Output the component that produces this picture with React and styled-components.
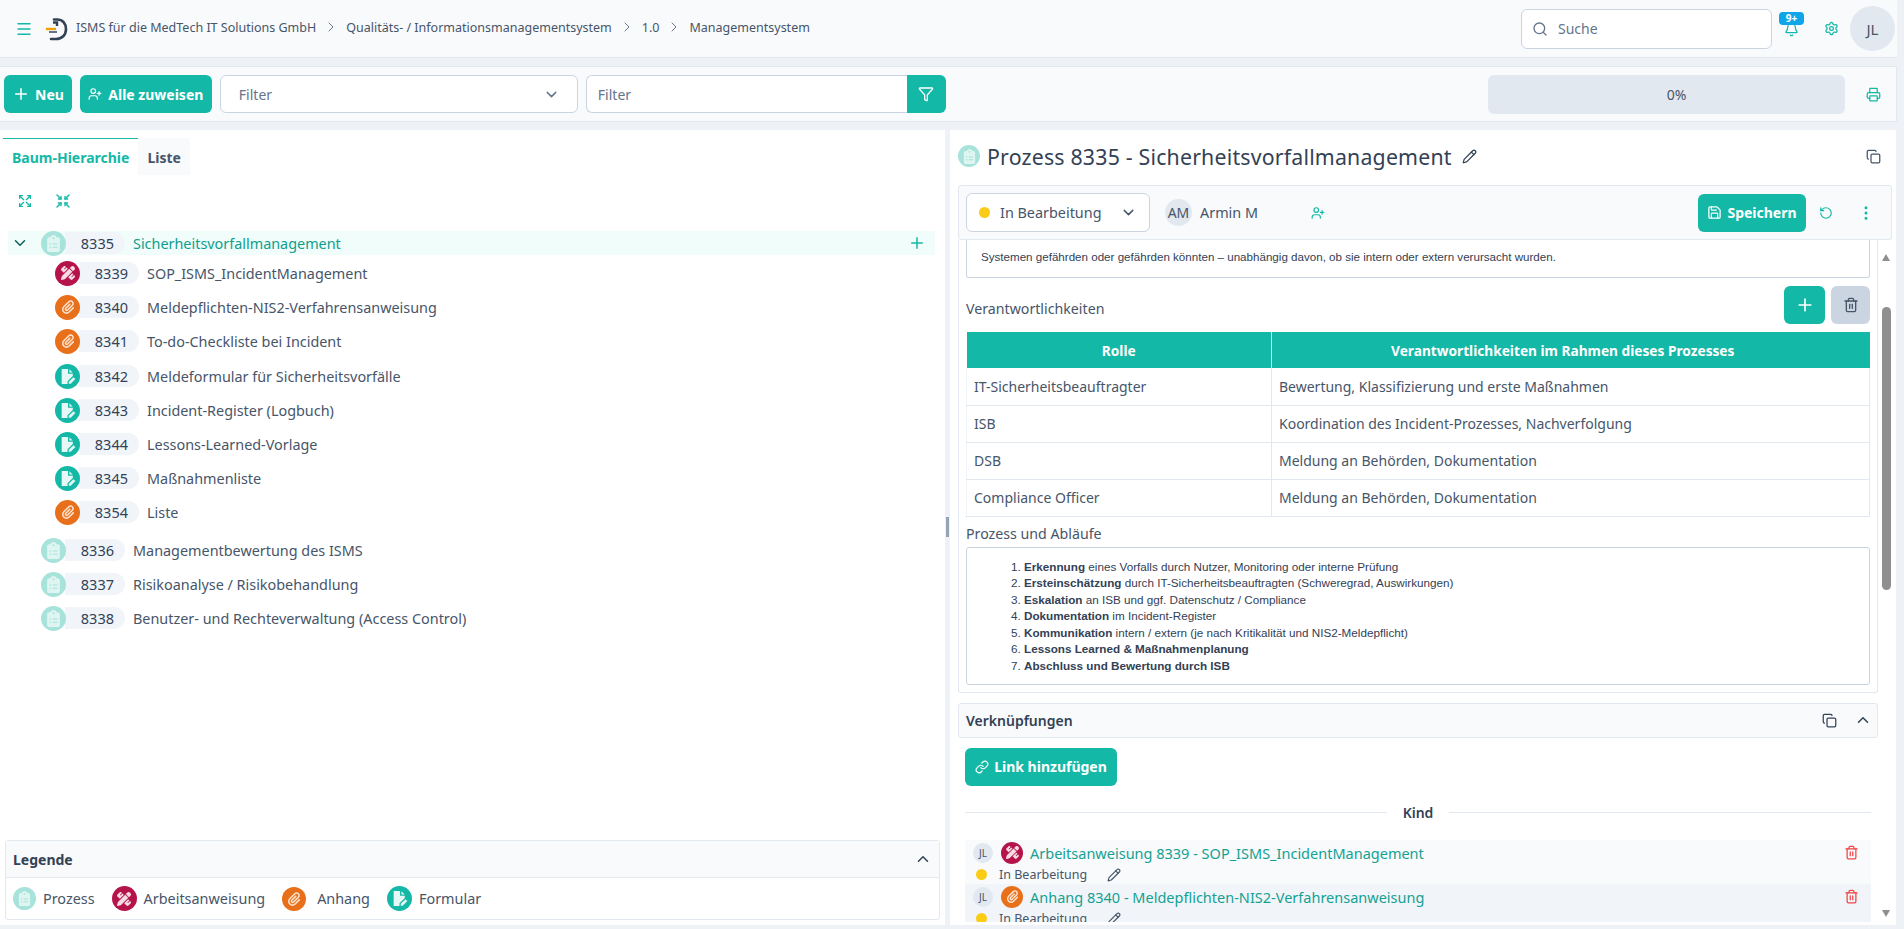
import styled, { createGlobalStyle } from "styled-components";
import {
  Bell,
  ChevronDown,
  ChevronRight,
  ChevronUp,
  Copy,
  EllipsisVertical,
  Filter,
  Link as LinkGlyph,
  Menu,
  Pencil,
  Plus,
  Printer,
  RotateCcw,
  Save,
  Search,
  Settings,
  Trash2,
  UserPlus,
} from "lucide-react";
import { FaClipboardList, FaPaperclip, FaPenRuler } from "react-icons/fa6";
import { TbArrowsMaximize, TbArrowsMinimize } from "react-icons/tb";

const teal = "#14b8a6";

const GlobalStyle = createGlobalStyle`
  html, body { margin: 0; padding: 0; }
  body {
    font-family: "Noto Sans", sans-serif;
    color: #334155;
    background: #eef2f6;
  }
  * { box-sizing: border-box; }
`;

const Page = styled.div`
  height: 929px;
  overflow: hidden;
  display: flex;
  flex-direction: column;
  background: #eef2f6;
`;

const Header = styled.header`
  height: 58px;
  flex: none;
  display: flex;
  align-items: center;
  margin-right: 7px;
  background: #f8fafc;
  border-bottom: 1px solid #e2e8f0;
  padding: 0 2px 0 15px;
`;

const MenuButton = styled.span`
  display: flex;
  color: ${teal};
  margin-right: 11px;
`;

const Crumbs = styled.nav`
  display: flex;
  align-items: center;
  gap: 7px;
  font-size: 12.5px;
  color: #475569;
  margin-left: 8px;
  margin-top: -3px;
  flex: 1;
`;

const Crumb = styled.span`
  white-space: nowrap;
`;

const SearchBox = styled.div`
  width: 251px;
  height: 40px;
  display: flex;
  align-items: center;
  gap: 10px;
  padding: 0 10px;
  background: #fff;
  border: 1px solid #cbd5e1;
  border-radius: 6px;
  font-size: 14px;
  color: #64748b;
  margin-right: 12px;
`;

const BellWrap = styled.span`
  position: relative;
  display: flex;
  color: ${teal};
  margin-right: 25px;
  margin-top: 2px;
`;

const Badge = styled.span`
  position: absolute;
  left: -5px;
  top: -10px;
  width: 25px;
  height: 13px;
  border-radius: 4px;
  background: #0ea5e9;
  color: #fff;
  font-size: 10px;
  font-weight: 700;
  line-height: 13px;
  text-align: center;
`;

const TealIcon = styled.span`
  display: flex;
  color: ${teal};
`;

const Avatar = styled.span`
  width: ${(p) => p.$size}px;
  height: ${(p) => p.$size}px;
  flex: none;
  border-radius: 50%;
  background: #e2e8f0;
  color: #475569;
  display: flex;
  align-items: center;
  justify-content: center;
  font-size: ${(p) => p.$font}px;
  margin-left: ${(p) => p.$left || 0}px;
`;

const Toolbar = styled.div`
  height: 56px;
  flex: none;
  margin: 8px 7px 0 0;
  display: flex;
  align-items: center;
  gap: 8px;
  background: #f8fafc;
  border: 1px solid #e2e8f0;
  border-left: 0;
  padding: 0 15px 0 4px;
`;

const TealButton = styled.button`
  height: 38px;
  display: inline-flex;
  align-items: center;
  justify-content: center;
  gap: 5px;
  border: 0;
  border-radius: 6px;
  background: ${teal};
  color: #fff;
  font-family: inherit;
  font-size: 14px;
  font-weight: 700;
  padding: 0 8px;
  flex: none;
`;

const AssignButton = styled(TealButton)`
  width: 132px;
  gap: 6px;
  padding: 0 7px;
`;

const SelectBox = styled.div`
  width: 358px;
  height: 38px;
  display: flex;
  align-items: center;
  justify-content: space-between;
  padding: 0 17px 0 18px;
  background: #fff;
  border: 1px solid #cbd5e1;
  border-radius: 6px;
  font-size: 14px;
  color: #64748b;
`;

const FilterGroup = styled.div`
  width: 360px;
  height: 38px;
  display: flex;
`;

const FilterInput = styled.div`
  flex: 1;
  display: flex;
  align-items: center;
  padding: 0 11px;
  background: #fff;
  border: 1px solid #cbd5e1;
  border-right: 0;
  border-radius: 6px 0 0 6px;
  font-size: 14px;
  color: #64748b;
`;

const FilterButton = styled.span`
  width: 39px;
  display: flex;
  align-items: center;
  justify-content: center;
  background: ${teal};
  color: #fff;
  border-radius: 0 6px 6px 0;
`;

const Progress = styled.div`
  width: 357px;
  height: 39px;
  margin-left: auto;
  margin-right: 13px;
  display: flex;
  align-items: center;
  justify-content: center;
  padding-left: 20px;
  background: #e2e8f0;
  border-radius: 6px;
  font-size: 14px;
  color: #475569;
`;

const Main = styled.main`
  flex: 1;
  margin: 8px 8px 4px 0;
  display: flex;
  min-height: 0;
`;

const LeftPanel = styled.section`
  width: 945px;
  flex: none;
  display: flex;
  flex-direction: column;
  background: #fff;
  padding: 8px 5px 5px 3px;
`;

const Tabs = styled.div`
  display: flex;
  height: 37px;
  flex: none;
`;

const Tab = styled.div`
  display: flex;
  align-items: center;
  padding: 0 9px;
  font-size: 14px;
  font-weight: 700;
  color: ${(p) => (p.$active ? teal : "#475569")};
  background: ${(p) => (p.$active ? "#fff" : "#f8fafc")};
  border-top: 1px solid ${(p) => (p.$active ? teal : "#f8fafc")};
`;

const TreeTools = styled.div`
  display: flex;
  gap: 22px;
  padding: 18px 0 0 14px;
  color: ${teal};
  height: 56px;
  flex: none;
`;

const Tree = styled.div`
  display: flex;
  flex-direction: column;
  padding: 0 5px;
`;

const TreeRow = styled.div`
  height: ${(p) => p.$h}px;
  display: flex;
  align-items: center;
  padding-left: ${(p) => p.$indent}px;
  margin-top: ${(p) => p.$top || 0}px;
  background: ${(p) => (p.$active ? "#f0fdfa" : "transparent")};
  font-size: 14.4px;
  color: #475569;
  white-space: nowrap;
`;

const ToggleSlot = styled.span`
  width: 38px;
  flex: none;
  display: flex;
  justify-content: flex-start;
  padding-left: 8px;
  color: #115e59;
  margin-left: -5px;
`;

const TypeCircle = styled.span`
  width: ${(p) => p.$size}px;
  height: ${(p) => p.$size}px;
  flex: none;
  border-radius: 50%;
  background: ${(p) => p.$bg};
  display: flex;
  align-items: center;
  justify-content: center;
  color: ${(p) => p.$fg};
  position: relative;
  z-index: 1;
`;

const IdPill = styled.span`
  width: 60px;
  height: 22px;
  margin-left: -1px;
  flex: none;
  display: flex;
  align-items: center;
  justify-content: flex-end;
  padding-right: 11px;
  background: #f1f5f9;
  border-radius: 0 11px 11px 0;
  color: #334155;
  font-size: 14.5px;
`;

const RowLabel = styled.span`
  margin-left: 8px;
  color: ${(p) => (p.$active ? "#0f9d8d" : "#475569")};
`;

const AddSlot = styled.span`
  margin-left: auto;
  margin-right: 9px;
  display: flex;
  color: ${teal};
`;

const Legend = styled.div`
  margin-top: auto;
  margin-left: 2px;
  border: 1px solid #e2e8f0;
  border-radius: 3px;
  flex: none;
`;

const LegendHead = styled.div`
  height: 37px;
  display: flex;
  align-items: center;
  justify-content: space-between;
  padding: 0 7px;
  background: #f8fafc;
  border-bottom: 1px solid #e2e8f0;
  font-size: 14px;
  font-weight: 700;
  color: #334155;
`;

const LegendBody = styled.div`
  height: 41px;
  display: flex;
  align-items: center;
  padding-left: 7px;
  font-size: 14.4px;
  color: #475569;
`;

const LegendItem = styled.span`
  display: flex;
  align-items: center;
  gap: ${(p) => p.$gap || 7}px;
  margin-right: 17px;
`;

const Splitter = styled.div`
  width: 5px;
  flex: none;
  display: flex;
  align-items: center;
  justify-content: center;
  padding-bottom: 2px;
  &::after {
    content: "";
    width: 3px;
    height: 20px;
    background: #94a3b8;
  }
`;

const RightPanel = styled.section`
  flex: 1;
  min-width: 0;
  display: flex;
  flex-direction: column;
  background: #fff;
  padding: 0 4px 0 8px;
`;

const TitleRow = styled.div`
  height: 55px;
  flex: none;
  display: flex;
  align-items: center;
  color: #334155;
  padding: 0 11px 3px 0;
`;

const Title = styled.h1`
  margin: 0 10px 0 7px;
  font-size: 21.3px;
  font-weight: 400;
  letter-spacing: 0.2px;
  color: #334155;
`;

const SpacedRight = styled.span`
  margin-left: auto;
  display: flex;
  color: #475569;
`;

const StatusBar = styled.div`
  height: 55px;
  flex: none;
  display: flex;
  align-items: center;
  background: #f8fafc;
  border: 1px solid #e2e8f0;
  border-radius: 3px;
  padding: 0 16px 0 7px;
  font-size: 14.4px;
  color: #475569;
`;

const StatusSelect = styled.div`
  width: 184px;
  height: 39px;
  display: flex;
  align-items: center;
  padding: 0 12px;
  background: #fff;
  border: 1px solid #cbd5e1;
  border-radius: 6px;
  color: #475569;
`;

const Dot = styled.span`
  width: 11px;
  height: 11px;
  border-radius: 50%;
  background: #facc15;
  flex: none;
`;

const LinkDot = styled(Dot)`
  margin-left: 3px;
`;

const StatusText = styled.span`
  margin-left: 10px;
  flex: 1;
`;

const OwnerName = styled.span`
  margin-left: 8px;
  width: 111px;
`;

const SaveButton = styled(TealButton)`
  margin-left: auto;
  width: 108px;
  margin-right: 13px;
`;

const IconGap = styled.span`
  display: flex;
  color: ${teal};
  margin-left: ${(p) => p.$left || 0}px;
`;

const Scroller = styled.div`
  flex: 1;
  min-height: 0;
  position: relative;
  overflow: hidden;
`;

const ScrollTrack = styled.div`
  position: absolute;
  right: 0;
  top: 0;
  bottom: 0;
  width: 14px;
  background: #fff;
`;

const ScrollThumb = styled.div`
  position: absolute;
  left: 4px;
  top: 67px;
  width: 9px;
  height: 283px;
  border-radius: 5px;
  background: #8f8f8f;
`;

const ScrollArrow = styled.div`
  position: absolute;
  left: 4px;
  ${(p) => (p.$down ? "bottom: 8px;" : "top: 14px;")}
  border-left: 4.5px solid transparent;
  border-right: 4.5px solid transparent;
  ${(p) => (p.$down ? "border-top" : "border-bottom")}: 7px solid #8f8f8f;
`;

const Content = styled.div`
  width: 920px;
`;

const DetailCard = styled.div`
  border: 1px solid #e2e8f0;
  border-top: 0;
  padding: 0 7px 7px;
  border-radius: 0 0 3px 3px;
`;

const RichBox = styled.div`
  background: #fff;
  border: 1px solid #cbd5e1;
  border-radius: 3px;
  font-family: "Liberation Sans", Arial, sans-serif;
  color: #334155;
`;

const ClippedBox = styled(RichBox)`
  height: 38px;
  border-top: 0;
  border-radius: 0 0 3px 3px;
  padding: 9px 14px 0;
  font-size: 11.6px;
  line-height: 16px;
`;

const LabelRow = styled.div`
  height: 54px;
  display: flex;
  align-items: center;
  justify-content: flex-end;
  gap: 6px;
  position: relative;
`;

const FieldLabel = styled.div`
  font-size: 14.2px;
  color: #475569;
  margin-right: auto;
  padding-top: ${(p) => p.$top || 0}px;
`;

const SquareButton = styled.span`
  width: ${(p) => (p.$muted ? 39 : 41)}px;
  height: 38px;
  border-radius: 6px;
  display: flex;
  align-items: center;
  justify-content: center;
  background: ${(p) => (p.$muted ? "#cbd5e1" : teal)};
  color: ${(p) => (p.$muted ? "#475569" : "#fff")};
`;

const Table = styled.table`
  width: 100%;
  border-collapse: collapse;
  table-layout: fixed;
  font-size: 14px;
  color: #475569;
`;

const Th = styled.th`
  height: 36px;
  background: ${teal};
  color: #fff;
  font-size: 13.7px;
  font-weight: 700;
  text-align: center;
  border-right: 1px solid #e2e8f0;
  padding: 0;
  &:last-child {
    border-right: 0;
    padding-right: 16px;
  }
`;

const Td = styled.td`
  height: 37px;
  padding: 0 7px;
  border-bottom: 1px solid #e2e8f0;
  border-right: 1px solid #e2e8f0;
  &:first-child { border-left: 1px solid #f1f5f9; }
`;

const ProcessLabel = styled.div`
  height: 30px;
  display: flex;
  align-items: center;
  font-size: 14.2px;
  color: #475569;
  padding-top: 3px;
`;

const ProcessBox = styled(RichBox)`
  height: 138px;
  padding-top: 11px;
  font-size: 11.7px;
`;

const OrderedList = styled.ol`
  margin: 0;
  padding-left: 57px;
  line-height: 16.6px;
`;

const LinksHead = styled.div`
  height: 35px;
  margin-top: 10px;
  display: flex;
  align-items: center;
  gap: 17px;
  padding: 0 5px 0 7px;
  background: #f8fafc;
  border: 1px solid #e2e8f0;
  border-radius: 3px;
  font-size: 14px;
  font-weight: 700;
  color: #334155;
`;

const HeadLabel = styled.span`
  margin-right: auto;
  font-weight: 600;
`;

const LinksBody = styled.div`
  padding: 10px 7px 0 7px;
`;

const LinkButton = styled(TealButton)`
  width: 152px;
`;

const Divider = styled.div`
  display: flex;
  align-items: center;
  gap: 16px;
  height: 24px;
  margin: 15px 0;
  font-size: 14px;
  font-weight: 600;
  color: #334155;
  &::before,
  &::after {
    content: "";
    flex: 1;
    height: 1px;
    background: #e2e8f0;
  }
`;

const LinkRow = styled.div`
  height: ${(p) => p.$h}px;
  background: ${(p) => (p.$alt ? "#f1f5f9" : "#f8fafc")};
  padding: 2px 8px 0 8px;
  overflow: hidden;
`;

const LinkTop = styled.div`
  display: flex;
  align-items: center;
  height: 22px;
  gap: 8px;
`;

const LinkTitle = styled.span`
  font-size: 14.5px;
  color: #14a192;
  margin-left: -1px;
  margin-right: auto;
`;

const LinkStatus = styled.div`
  display: flex;
  align-items: center;
  height: 20px;
  font-size: 12.5px;
  color: #475569;
  margin-top: 1px;
  gap: 12px;
`;

const LinkStatusText = styled.span`
  margin-right: 8px;
`;

const DangerIcon = styled.span`
  display: flex;
  color: #ef4444;
  margin-right: 4px;
`;

const LogoMark = styled.svg`
  flex: none;
`;

function FormGlyph({ size }) {
  return (
    <svg width={size} height={size} viewBox="0 0 16 16" fill="currentColor">
      <path d="M2.5 1 H8.5 V5.5 H13 V7.5 L8 12.5 V15 H2.5 Z" />
      <path d="M9.8 1.2 L12.8 4.2 H9.8 Z" />
      <path d="M9.2 13 L13.6 8.6 L15.4 10.4 L11 14.8 H9.2 Z" />
    </svg>
  );
}

const KINDS = {
  process: { bg: "#a7e3da", fg: "#dff5f1", Icon: FaClipboardList, scale: 0.66 },
  work: { bg: "#b5134a", fg: "#f7dbe4", Icon: FaPenRuler, scale: 0.58 },
  attach: { bg: "#e8701a", fg: "#fbe3d0", Icon: FaPaperclip, scale: 0.58 },
  form: { bg: teal, fg: "#e6f8f5", Icon: FormGlyph, scale: 0.66 },
};

function TypeIcon({ kind, size = 25 }) {
  const { bg, fg, Icon, scale } = KINDS[kind];
  return (
    <TypeCircle $bg={bg} $fg={fg} $size={size}>
      <Icon size={Math.round(size * scale)} />
    </TypeCircle>
  );
}

function Logo() {
  return (
    <LogoMark width="24" height="26" viewBox="0 0 24 26" fill="none">
      <path d="M10 3.5 H13 C19 3.5 22 8 22 13 C22 19 18 23 12 23 H7" stroke="#334155" strokeWidth="2.6" strokeLinecap="round" />
      <path d="M9 6.5 H13 V10" stroke="#334155" strokeWidth="2.4" />
      <path d="M2 13 H12" stroke="#f59e0b" strokeWidth="2.4" />
      <path d="M5 16 H13" stroke="#64748b" strokeWidth="2" />
    </LogoMark>
  );
}

const children = [
  ["work", "8339", "SOP_ISMS_IncidentManagement", 1],
  ["attach", "8340", "Meldepflichten-NIS2-Verfahrensanweisung", 0],
  ["attach", "8341", "To-do-Checkliste bei Incident", 0],
  ["form", "8342", "Meldeformular für Sicherheitsvorfälle", 1],
  ["form", "8343", "Incident-Register (Logbuch)", 0],
  ["form", "8344", "Lessons-Learned-Vorlage", 0],
  ["form", "8345", "Maßnahmenliste", 0],
  ["attach", "8354", "Liste", 0],
];

const siblings = [
  ["8336", "Managementbewertung des ISMS", 4],
  ["8337", "Risikoanalyse / Risikobehandlung", 0],
  ["8338", "Benutzer- und Rechteverwaltung (Access Control)", 0],
];

const roles = [
  ["IT-Sicherheitsbeauftragter", "Bewertung, Klassifizierung und erste Maßnahmen"],
  ["ISB", "Koordination des Incident-Prozesses, Nachverfolgung"],
  ["DSB", "Meldung an Behörden, Dokumentation"],
  ["Compliance Officer", "Meldung an Behörden, Dokumentation"],
];

export default function App() {
  return (
    <Page>
      <GlobalStyle />
      <Header>
        <MenuButton>
          <Menu size={18} />
        </MenuButton>
        <Logo />
        <Crumbs>
          <Crumb>ISMS für die MedTech IT Solutions GmbH</Crumb>
          <ChevronRight size={16} strokeWidth={1.2} />
          <Crumb>Qualitäts- / Informationsmanagementsystem</Crumb>
          <ChevronRight size={16} strokeWidth={1.2} />
          <Crumb>1.0</Crumb>
          <ChevronRight size={16} strokeWidth={1.2} />
          <Crumb>Managementsystem</Crumb>
        </Crumbs>
        <SearchBox>
          <Search size={16} />
          Suche
        </SearchBox>
        <BellWrap>
          <Bell size={15} />
          <Badge>9+</Badge>
        </BellWrap>
        <TealIcon>
          <Settings size={15} />
        </TealIcon>
        <Avatar $size={45} $font={15} $left={11}>JL</Avatar>
      </Header>

      <Toolbar>
        <TealButton>
          <Plus size={18} />
          Neu
        </TealButton>
        <AssignButton>
          <UserPlus size={14} />
          Alle zuweisen
        </AssignButton>
        <SelectBox>
          Filter
          <ChevronDown size={17} />
        </SelectBox>
        <FilterGroup>
          <FilterInput>Filter</FilterInput>
          <FilterButton>
            <Filter size={16} />
          </FilterButton>
        </FilterGroup>
        <Progress>0%</Progress>
        <TealIcon>
          <Printer size={15} />
        </TealIcon>
      </Toolbar>

      <Main>
        <LeftPanel>
          <Tabs>
            <Tab $active>Baum-Hierarchie</Tab>
            <Tab>Liste</Tab>
          </Tabs>
          <TreeTools>
            <TbArrowsMaximize size={16} />
            <TbArrowsMinimize size={16} />
          </TreeTools>
          <Tree>
            <TreeRow $h={24} $active $indent={0}>
              <ToggleSlot>
                <ChevronDown size={18} />
              </ToggleSlot>
              <TypeIcon kind="process" size={25} />
              <IdPill>8335</IdPill>
              <RowLabel $active>Sicherheitsvorfallmanagement</RowLabel>
              <AddSlot>
                <Plus size={18} />
              </AddSlot>
            </TreeRow>
            {children.map(([kind, id, label, top]) => (
              <TreeRow key={id} $h={34} $indent={47} $top={top}>
                <TypeIcon kind={kind} />
                <IdPill>{id}</IdPill>
                <RowLabel>{label}</RowLabel>
              </TreeRow>
            ))}
            {siblings.map(([id, label, top]) => (
              <TreeRow key={id} $h={34} $indent={33} $top={top}>
                <TypeIcon kind="process" />
                <IdPill>{id}</IdPill>
                <RowLabel>{label}</RowLabel>
              </TreeRow>
            ))}
          </Tree>
          <Legend>
            <LegendHead>
              Legende
              <ChevronUp size={18} />
            </LegendHead>
            <LegendBody>
              <LegendItem>
                <TypeIcon kind="process" size={23} />
                Prozess
              </LegendItem>
              <LegendItem>
                <TypeIcon kind="work" />
                Arbeitsanweisung
              </LegendItem>
              <LegendItem $gap={11}>
                <TypeIcon kind="attach" size={24} />
                Anhang
              </LegendItem>
              <LegendItem>
                <TypeIcon kind="form" />
                Formular
              </LegendItem>
            </LegendBody>
          </Legend>
        </LeftPanel>

        <Splitter />

        <RightPanel>
          <TitleRow>
            <TypeIcon kind="process" size={22} />
            <Title>Prozess 8335 - Sicherheitsvorfallmanagement</Title>
            <Pencil size={15} />
            <SpacedRight>
              <Copy size={15} />
            </SpacedRight>
          </TitleRow>
          <StatusBar>
            <StatusSelect>
              <Dot />
              <StatusText>In Bearbeitung</StatusText>
              <ChevronDown size={17} />
            </StatusSelect>
            <Avatar $size={27} $font={14} $left={15}>AM</Avatar>
            <OwnerName>Armin M</OwnerName>
            <IconGap>
              <UserPlus size={14} />
            </IconGap>
            <SaveButton>
              <Save size={15} />
              Speichern
            </SaveButton>
            <IconGap>
              <RotateCcw size={14} />
            </IconGap>
            <IconGap $left={24}>
              <EllipsisVertical size={18} />
            </IconGap>
          </StatusBar>
          <Scroller>
            <Content>
              <DetailCard>
                <ClippedBox>
                  Systemen gefährden oder gefährden könnten – unabhängig davon, ob sie intern oder extern verursacht wurden.
                </ClippedBox>
                <LabelRow>
                  <FieldLabel $top={6}>Verantwortlichkeiten</FieldLabel>
                  <SquareButton>
                    <Plus size={20} />
                  </SquareButton>
                  <SquareButton $muted>
                    <Trash2 size={16} />
                  </SquareButton>
                </LabelRow>
                <Table>
                  <colgroup>
                    <col style={{ width: 305 }} />
                    <col />
                  </colgroup>
                  <thead>
                    <tr>
                      <Th>Rolle</Th>
                      <Th>Verantwortlichkeiten im Rahmen dieses Prozesses</Th>
                    </tr>
                  </thead>
                  <tbody>
                    {roles.map(([role, duty]) => (
                      <tr key={role}>
                        <Td>{role}</Td>
                        <Td>{duty}</Td>
                      </tr>
                    ))}
                  </tbody>
                </Table>
                <ProcessLabel>Prozess und Abläufe</ProcessLabel>
                <ProcessBox>
                  <OrderedList>
                    <li><strong>Erkennung</strong> eines Vorfalls durch Nutzer, Monitoring oder interne Prüfung</li>
                    <li><strong>Ersteinschätzung</strong> durch IT-Sicherheitsbeauftragten (Schweregrad, Auswirkungen)</li>
                    <li><strong>Eskalation</strong> an ISB und ggf. Datenschutz / Compliance</li>
                    <li><strong>Dokumentation</strong> im Incident-Register</li>
                    <li><strong>Kommunikation</strong> intern / extern (je nach Kritikalität und NIS2-Meldepflicht)</li>
                    <li><strong>Lessons Learned &amp; Maßnahmenplanung</strong></li>
                    <li><strong>Abschluss und Bewertung durch ISB</strong></li>
                  </OrderedList>
                </ProcessBox>
              </DetailCard>
              <LinksHead>
                <HeadLabel>Verknüpfungen</HeadLabel>
                <Copy size={15} />
                <ChevronUp size={18} />
              </LinksHead>
              <LinksBody>
                <LinkButton>
                  <LinkGlyph size={14} />
                  Link hinzufügen
                </LinkButton>
                <Divider>Kind</Divider>
                <LinkRow $h={44}>
                  <LinkTop>
                    <Avatar $size={20} $font={10}>JL</Avatar>
                    <TypeIcon kind="work" size={22} />
                    <LinkTitle>Arbeitsanweisung 8339 - SOP_ISMS_IncidentManagement</LinkTitle>
                    <DangerIcon>
                      <Trash2 size={15} />
                    </DangerIcon>
                  </LinkTop>
                  <LinkStatus>
                    <LinkDot />
                    <LinkStatusText>In Bearbeitung</LinkStatusText>
                    <Pencil size={14} />
                  </LinkStatus>
                </LinkRow>
                <LinkRow $h={38} $alt>
                  <LinkTop>
                    <Avatar $size={20} $font={10}>JL</Avatar>
                    <TypeIcon kind="attach" size={22} />
                    <LinkTitle>Anhang 8340 - Meldepflichten-NIS2-Verfahrensanweisung</LinkTitle>
                    <DangerIcon>
                      <Trash2 size={15} />
                    </DangerIcon>
                  </LinkTop>
                  <LinkStatus>
                    <LinkDot />
                    <LinkStatusText>In Bearbeitung</LinkStatusText>
                    <Pencil size={14} />
                  </LinkStatus>
                </LinkRow>
              </LinksBody>
            </Content>
            <ScrollTrack>
              <ScrollArrow />
              <ScrollThumb />
              <ScrollArrow $down />
            </ScrollTrack>
          </Scroller>
        </RightPanel>
      </Main>
    </Page>
  );
}
